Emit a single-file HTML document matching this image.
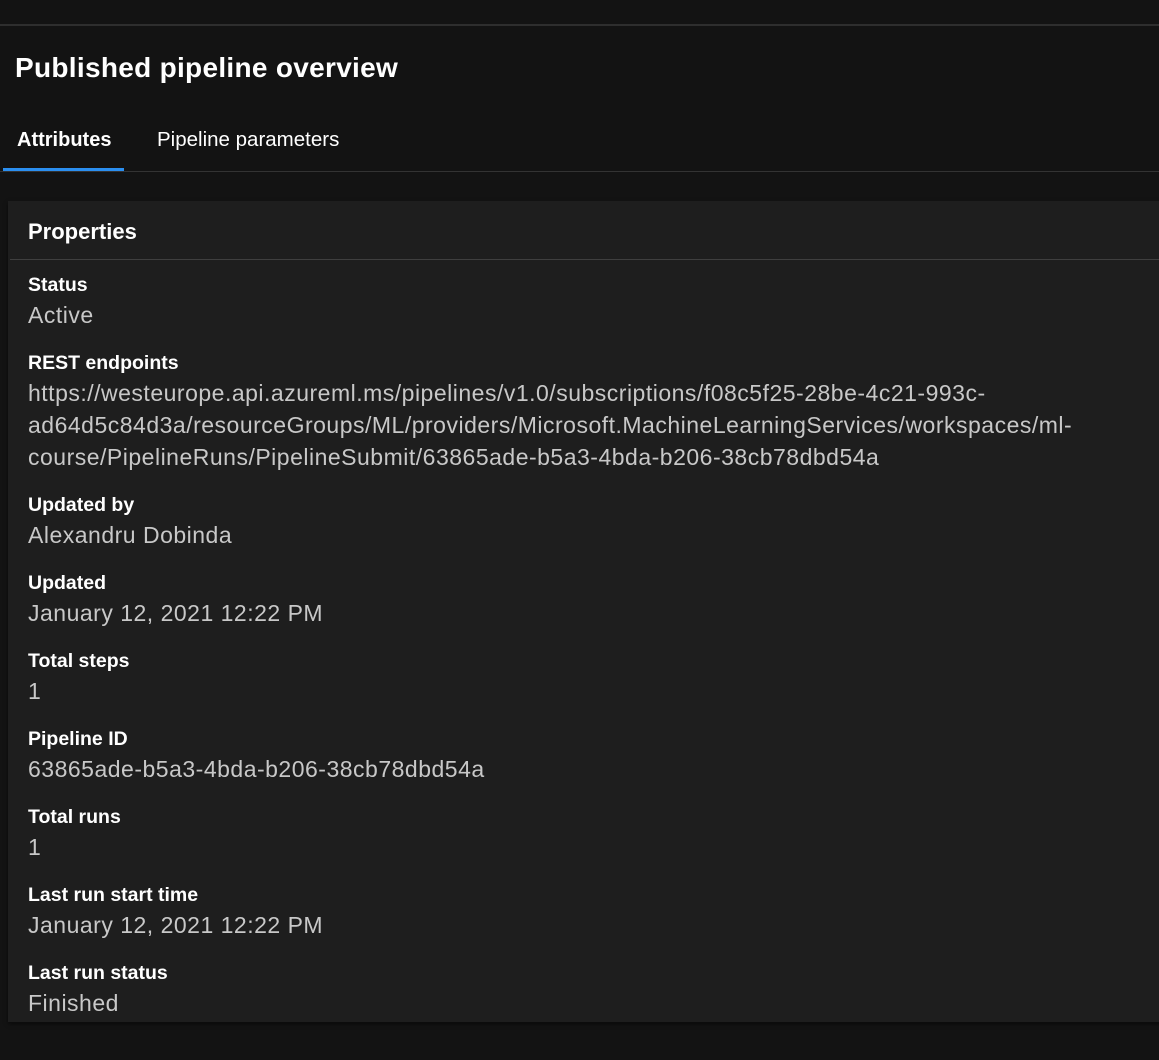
<!DOCTYPE html>
<html><head><meta charset="utf-8"><style>
html,body{margin:0;padding:0;background:#131313;width:1159px;height:1060px;overflow:hidden;font-family:"Liberation Sans",sans-serif;}
.t{position:absolute;white-space:nowrap;line-height:1;}
.topline{position:absolute;left:0;top:24px;width:1159px;height:2px;background:#2e2e2e;}
.title{left:15px;top:54px;font-size:28px;font-weight:bold;color:#fff;letter-spacing:0.3px;}
.tab{top:130px;font-size:20.5px;color:#fff;}
.ul{position:absolute;left:3px;top:168px;width:121px;height:3px;background:#2b8ff0;}
.tabline{position:absolute;left:0;top:171px;width:1159px;height:1px;background:#333;}
.card{position:absolute;left:8px;top:201px;width:1160px;height:821px;background:#1e1e1e;box-shadow:0 2px 4px rgba(0,0,0,.5);}
.hline{position:absolute;left:10px;top:259px;width:1149px;height:1px;background:#3f3f3f;}
.ph{left:28px;top:221px;font-size:22px;font-weight:bold;color:#fff;}
.l{left:28px;font-size:19.5px;font-weight:bold;color:#fff;}
.v{left:28px;font-size:23px;letter-spacing:0.5px;color:#c8c8c8;}
</style></head><body>
<div class="topline"></div>
<div class="t title">Published pipeline overview</div>
<div class="t tab" style="left:17px;font-weight:bold;font-size:20px">Attributes</div>
<div class="t tab" style="left:157px">Pipeline parameters</div>
<div class="ul"></div>
<div class="tabline"></div>
<div class="card"></div>
<div class="hline"></div>
<div class="t ph">Properties</div>

<div class="t l" style="top:276px">Status</div>
<div class="t v" style="top:304px">Active</div>
<div class="t l" style="top:354px">REST endpoints</div>
<div class="t v" style="top:382px">https://westeurope.api.azureml.ms/pipelines/v1.0/subscriptions/f08c5f25-28be-4c21-993c-</div>
<div class="t v" style="top:414px">ad64d5c84d3a/resourceGroups/ML/providers/Microsoft.MachineLearningServices/workspaces/ml-</div>
<div class="t v" style="top:446px">course/PipelineRuns/PipelineSubmit/63865ade-b5a3-4bda-b206-38cb78dbd54a</div>
<div class="t l" style="top:496px">Updated by</div>
<div class="t v" style="top:524px">Alexandru Dobinda</div>
<div class="t l" style="top:574px">Updated</div>
<div class="t v" style="top:602px">January 12, 2021 12:22 PM</div>
<div class="t l" style="top:652px">Total steps</div>
<div class="t v" style="top:680px">1</div>
<div class="t l" style="top:730px">Pipeline ID</div>
<div class="t v" style="top:758px">63865ade-b5a3-4bda-b206-38cb78dbd54a</div>
<div class="t l" style="top:808px">Total runs</div>
<div class="t v" style="top:836px">1</div>
<div class="t l" style="top:886px">Last run start time</div>
<div class="t v" style="top:914px">January 12, 2021 12:22 PM</div>
<div class="t l" style="top:964px">Last run status</div>
<div class="t v" style="top:992px">Finished</div>
</body></html>
